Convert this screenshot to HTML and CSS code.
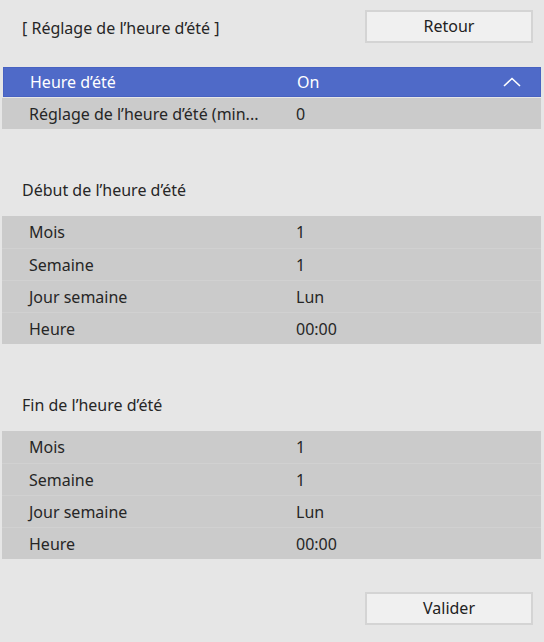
FILE: index.html
```html
<!DOCTYPE html>
<html lang="fr">
<head>
<meta charset="utf-8">
<link rel="stylesheet" href="styles.css">
</head>
<body>
<div class="screen">
  <div class="header">
    <div class="title">[ Réglage de l’heure d’été ]</div>
    <div class="btn">Retour</div>
  </div>

  <div class="row selected">
    <span class="label">Heure d’été</span>
    <span class="value">On</span>
    <svg class="chev" width="18" height="10" viewBox="0 0 18 10"><path d="M1 9 L9 1.5 L17 9" fill="none" stroke="#fff" stroke-width="1.6"/></svg>
  </div>
  <div class="row single">
    <span class="label">Réglage de l’heure d’été (min...</span>
    <span class="value">0</span>
  </div>

  <div class="section">Début de l’heure d’été</div>
  <div class="block">
    <div class="row"><span class="label">Mois</span><span class="value">1</span></div>
    <div class="row"><span class="label">Semaine</span><span class="value">1</span></div>
    <div class="row"><span class="label">Jour semaine</span><span class="value">Lun</span></div>
    <div class="row"><span class="label">Heure</span><span class="value">00:00</span></div>
  </div>

  <div class="section">Fin de l’heure d’été</div>
  <div class="block">
    <div class="row"><span class="label">Mois</span><span class="value">1</span></div>
    <div class="row"><span class="label">Semaine</span><span class="value">1</span></div>
    <div class="row"><span class="label">Jour semaine</span><span class="value">Lun</span></div>
    <div class="row"><span class="label">Heure</span><span class="value">00:00</span></div>
  </div>

  <div class="footer">
    <div class="btn">Valider</div>
  </div>
</div>
</body>
</html>
```

FILE: styles.css
```css
html, body {
  margin: 0;
  padding: 0;
  background: #e6e6e6;
}
.screen {
  width: 544px;
  height: 642px;
  font-family: "Noto Sans", "Open Sans", sans-serif;
  font-size: 16px;
  color: #262626;
  box-sizing: border-box;
  padding: 0 3px 0 2px;
}
.header {
  height: 67px;
  display: flex;
  justify-content: space-between;
  align-items: flex-start;
  padding: 10px 8px 0 20px;
  box-sizing: border-box;
}
.title {
  line-height: 33px;
  padding-top: 2px;
}
.btn {
  width: 168px;
  height: 33px;
  box-sizing: border-box;
  background: #f0f0f0;
  border: 2px solid #d4d4d4;
  display: flex;
  align-items: center;
  justify-content: center;
  color: #222;
  padding-bottom: 2px;
}
.row {
  position: relative;
  height: 32px;
  display: flex;
  align-items: center;
  box-sizing: border-box;
}
.label {
  width: 266px;
  padding-left: 27px;
  box-sizing: border-box;
  flex: none;
  white-space: nowrap;
}
.value {
  padding-left: 28px;
}
.selected {
  height: 30px;
  margin-left: 1px;
  background: #4f6ac8;
  border: 1px solid #4862c2;
  color: #fff;
}
.selected .label { padding-left: 26px; }
.selected .value { padding-left: 27px; }
.chev {
  position: absolute;
  right: 19px;
  top: 9px;
}
.single {
  margin-top: 1px;
  height: 31px;
  background: #cbcbcb;
}
.single .label { width: 264px; }
.single .value { padding-left: 30px; }
.section {
  height: 87px;
  display: flex;
  align-items: flex-end;
  padding: 0 0 16px 20px;
  box-sizing: border-box;
  line-height: 20px;
}
.block {
  background: #cbcbcb;
}
.block .row + .row {
  border-top: 1px solid #d1d1d1;
}
.footer {
  display: flex;
  justify-content: flex-end;
  padding: 33px 8px 0 0;
}
```
